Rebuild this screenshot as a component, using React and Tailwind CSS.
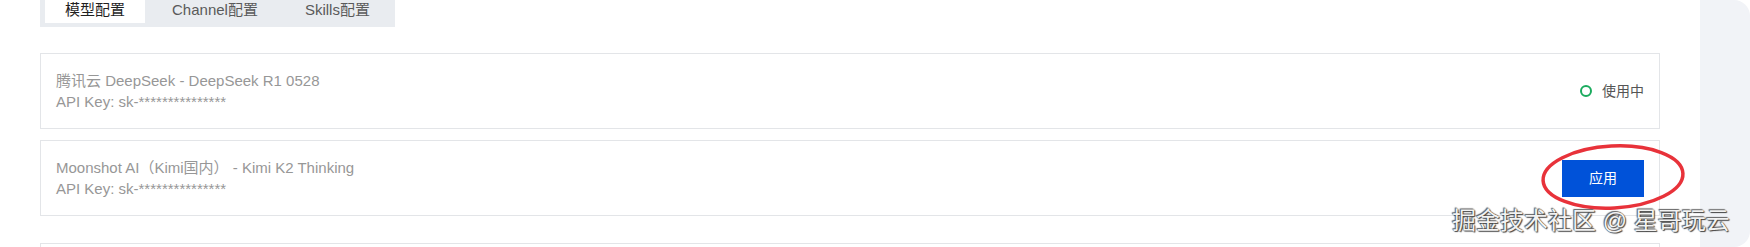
import React from "react";

const tabs = ["模型配置", "Channel配置", "Skills配置"];

const models = [
  { name: "腾讯云 DeepSeek - DeepSeek R1 0528", key: "sk-***************", active: true },
  { name: "Moonshot AI（Kimi国内） - Kimi K2 Thinking", key: "sk-***************", active: false },
];

const ModelCard = ({ model }) => {
  return (
    <div className="flex items-center justify-between border border-[#e3e5e8] bg-white pl-[15px] pr-[15px] py-4 h-[76px]">
      <div className="text-[15px] leading-[21px] text-[#979797]">
        <div>{model.name}</div>
        <div>API Key: {model.key}</div>
      </div>
      {model.active ? (
        <div className="flex items-center gap-[10px] text-[14px] text-[#555]">
          <span className="w-[12px] h-[12px] rounded-full border-2 border-[#1bab5e]" />
          <span>使用中</span>
        </div>
      ) : (
        <div className="relative">
          <button className="w-[82px] h-[37px] bg-[#0052d9] text-white text-[14px]">应用</button>
          {/* red mark drawn on the screenshot */}
          <svg className="absolute left-[-22px] top-[-18px] pointer-events-none" width="148" height="70" viewBox="0 0 148 70">
            <ellipse cx="73" cy="35" rx="70" ry="31" fill="none" stroke="#e8323a" strokeWidth="3.5" transform="rotate(-3 73 35)" />
          </svg>
        </div>
      )}
    </div>
  );
};

const App = () => {
  return (
    <div className="relative flex w-[1750px] h-[247px] overflow-hidden bg-white font-['Liberation_Sans','Noto_Sans_CJK_SC',sans-serif]">
      <div className="w-[1700px] px-10">
        <div className="flex gap-[7px] w-[355px] h-[27px] bg-[#e9ecf0] px-[5px]">
          {tabs.map((t, i) => (
            <div
              key={t}
              className={
                i === 0
                  ? "h-[23px] px-5 bg-white text-[15px] leading-[20px] text-[#1f1f1f]"
                  : "h-[23px] px-5 text-[15px] leading-[20px] text-[#5a5a5a]"
              }
            >
              {t}
            </div>
          ))}
        </div>
        <div className="mt-[26px]">
          <ModelCard model={models[0]} />
        </div>
        <div className="mt-[11px]">
          <ModelCard model={models[1]} />
        </div>
        <div className="mt-[27px] h-[40px] border border-[#e3e5e8]" />
      </div>
      <div className="w-[50px] bg-[#f1f3f7] rounded-r-[16px]" />
      <div className="absolute left-[1452px] top-[206px] text-[24px] leading-[30px] text-[#f2f2f2] [text-shadow:0_0_1px_#333,1px_1px_1px_#444,-1px_-1px_1px_#666]">
        掘金技术社区 @ 星哥玩云
      </div>
    </div>
  );
};

export default App;
